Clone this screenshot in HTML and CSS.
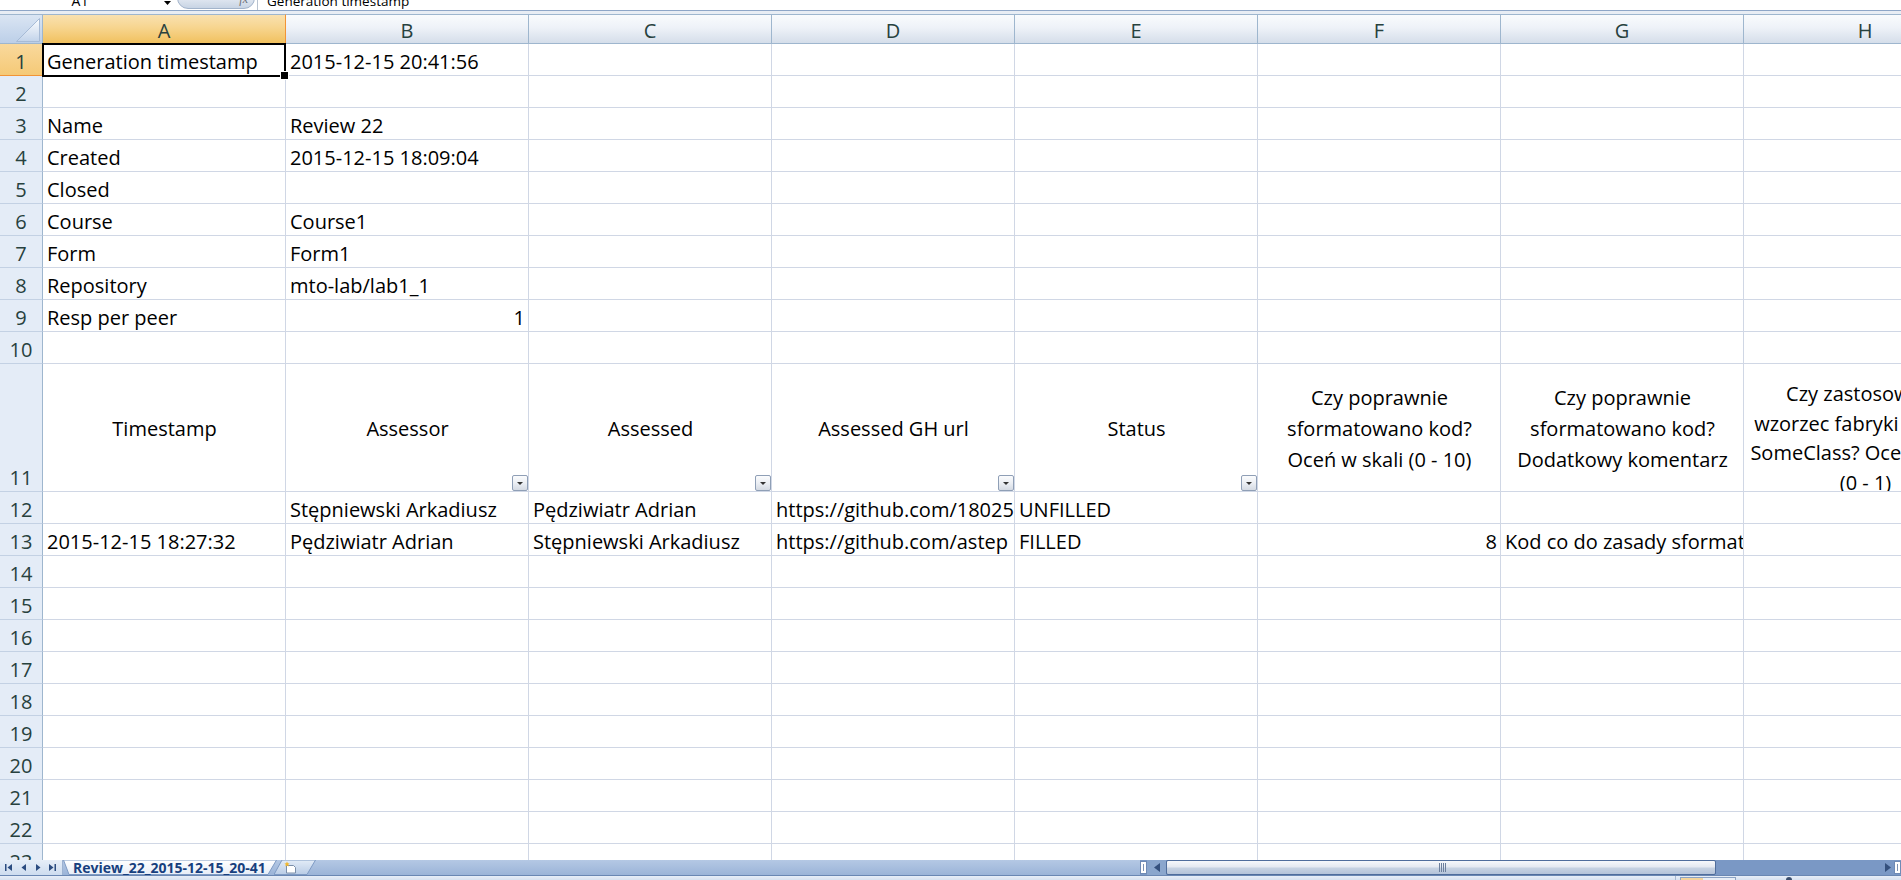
FILE: index.html
```html
<!DOCTYPE html>
<html lang="pl">
<head>
<meta charset="utf-8">
<title>Review_22_2015-12-15_20-41</title>
<link rel="stylesheet" href="styles.css">
</head>
<body>
<div class="app">
  <div class="fbar">
    <div class="namebox">
      <span class="nb-text">A1</span>
      <svg class="nb-arrow" width="7" height="4" viewBox="0 0 7 4"><path d="M0 0h7L3.5 4z" fill="#000"/></svg>
    </div>
    <div class="fxbtn"><span class="fx">fx</span></div>
    <div class="fdiv"></div>
    <div class="ftext">Generation timestamp</div>
  </div>
  <div class="sep"></div>

  <div class="sheet">
    <div class="row hdr">
      <div class="corner"><svg width="42" height="28" viewBox="0 0 42 28"><defs><linearGradient id="tg" x1="0" y1="0" x2="0" y2="1"><stop offset="0" stop-color="#fdfeff"/><stop offset="1" stop-color="#c2d3ea"/></linearGradient></defs><path d="M16.5 26.5H39.5V3.5Z" fill="url(#tg)" stroke="#a7bbd6"/></svg></div>
      <div class="ch sel">A</div><div class="ch">B</div><div class="ch">C</div><div class="ch">D</div><div class="ch">E</div><div class="ch">F</div><div class="ch">G</div><div class="ch">H</div>
    </div>

    <div class="row"><div class="rh sel">1</div><div class="c active">Generation timestamp</div><div class="c">2015-12-15 20:41:56</div><div class="c"></div><div class="c"></div><div class="c"></div><div class="c"></div><div class="c"></div><div class="c"></div></div>
    <div class="row"><div class="rh">2</div><div class="c"></div><div class="c"></div><div class="c"></div><div class="c"></div><div class="c"></div><div class="c"></div><div class="c"></div><div class="c"></div></div>
    <div class="row"><div class="rh">3</div><div class="c">Name</div><div class="c">Review 22</div><div class="c"></div><div class="c"></div><div class="c"></div><div class="c"></div><div class="c"></div><div class="c"></div></div>
    <div class="row"><div class="rh">4</div><div class="c">Created</div><div class="c">2015-12-15 18:09:04</div><div class="c"></div><div class="c"></div><div class="c"></div><div class="c"></div><div class="c"></div><div class="c"></div></div>
    <div class="row"><div class="rh">5</div><div class="c">Closed</div><div class="c"></div><div class="c"></div><div class="c"></div><div class="c"></div><div class="c"></div><div class="c"></div><div class="c"></div></div>
    <div class="row"><div class="rh">6</div><div class="c">Course</div><div class="c">Course1</div><div class="c"></div><div class="c"></div><div class="c"></div><div class="c"></div><div class="c"></div><div class="c"></div></div>
    <div class="row"><div class="rh">7</div><div class="c">Form</div><div class="c">Form1</div><div class="c"></div><div class="c"></div><div class="c"></div><div class="c"></div><div class="c"></div><div class="c"></div></div>
    <div class="row"><div class="rh">8</div><div class="c">Repository</div><div class="c">mto-lab/lab1_1</div><div class="c"></div><div class="c"></div><div class="c"></div><div class="c"></div><div class="c"></div><div class="c"></div></div>
    <div class="row"><div class="rh">9</div><div class="c">Resp per peer</div><div class="c r">1</div><div class="c"></div><div class="c"></div><div class="c"></div><div class="c"></div><div class="c"></div><div class="c"></div></div>
    <div class="row"><div class="rh">10</div><div class="c"></div><div class="c"></div><div class="c"></div><div class="c"></div><div class="c"></div><div class="c"></div><div class="c"></div><div class="c"></div></div>

    <div class="row tall">
      <div class="rh">11</div>
      <div class="c"><span>Timestamp</span></div>
      <div class="c"><span>Assessor</span><i class="fb"></i></div>
      <div class="c"><span>Assessed</span><i class="fb"></i></div>
      <div class="c"><span>Assessed GH url</span><i class="fb"></i></div>
      <div class="c"><span>Status</span><i class="fb"></i></div>
      <div class="c"><span>Czy poprawnie<br>sformatowano kod?<br>Oceń w skali (0 - 10)</span></div>
      <div class="c"><span>Czy poprawnie<br>sformatowano kod?<br>Dodatkowy komentarz</span></div>
      <div class="c h4"><span>Czy zastosowano<br>wzorzec fabryki w klasie<br>SomeClass? Oceń w skali<br>(0 - 1)</span></div>
    </div>

    <div class="row"><div class="rh">12</div><div class="c"></div><div class="c">Stępniewski Arkadiusz</div><div class="c">Pędziwiatr Adrian</div><div class="c">https://github.com/18025</div><div class="c">UNFILLED</div><div class="c"></div><div class="c"></div><div class="c"></div></div>
    <div class="row"><div class="rh">13</div><div class="c">2015-12-15 18:27:32</div><div class="c">Pędziwiatr Adrian</div><div class="c">Stępniewski Arkadiusz</div><div class="c">https://github.com/astep</div><div class="c">FILLED</div><div class="c r">8</div><div class="c">Kod co do zasady sformatowany</div><div class="c"></div></div>
    <div class="row"><div class="rh">14</div><div class="c"></div><div class="c"></div><div class="c"></div><div class="c"></div><div class="c"></div><div class="c"></div><div class="c"></div><div class="c"></div></div>
    <div class="row"><div class="rh">15</div><div class="c"></div><div class="c"></div><div class="c"></div><div class="c"></div><div class="c"></div><div class="c"></div><div class="c"></div><div class="c"></div></div>
    <div class="row"><div class="rh">16</div><div class="c"></div><div class="c"></div><div class="c"></div><div class="c"></div><div class="c"></div><div class="c"></div><div class="c"></div><div class="c"></div></div>
    <div class="row"><div class="rh">17</div><div class="c"></div><div class="c"></div><div class="c"></div><div class="c"></div><div class="c"></div><div class="c"></div><div class="c"></div><div class="c"></div></div>
    <div class="row"><div class="rh">18</div><div class="c"></div><div class="c"></div><div class="c"></div><div class="c"></div><div class="c"></div><div class="c"></div><div class="c"></div><div class="c"></div></div>
    <div class="row"><div class="rh">19</div><div class="c"></div><div class="c"></div><div class="c"></div><div class="c"></div><div class="c"></div><div class="c"></div><div class="c"></div><div class="c"></div></div>
    <div class="row"><div class="rh">20</div><div class="c"></div><div class="c"></div><div class="c"></div><div class="c"></div><div class="c"></div><div class="c"></div><div class="c"></div><div class="c"></div></div>
    <div class="row"><div class="rh">21</div><div class="c"></div><div class="c"></div><div class="c"></div><div class="c"></div><div class="c"></div><div class="c"></div><div class="c"></div><div class="c"></div></div>
    <div class="row"><div class="rh">22</div><div class="c"></div><div class="c"></div><div class="c"></div><div class="c"></div><div class="c"></div><div class="c"></div><div class="c"></div><div class="c"></div></div>
    <div class="row"><div class="rh">23</div><div class="c"></div><div class="c"></div><div class="c"></div><div class="c"></div><div class="c"></div><div class="c"></div><div class="c"></div><div class="c"></div></div>
  </div>

  <div class="tabbar">
    <div class="nav">
      <svg width="62" height="15" viewBox="0 0 62 15">
        <g fill="#2b4c80">
          <rect x="5" y="4" width="1.5" height="7"/>
          <path d="M12 4v7L7.5 7.5z"/>
          <path d="M26 4v7L21.5 7.5z"/>
          <path d="M36 4v7L40.5 7.5z"/>
          <path d="M49 4v7L53.5 7.5z"/>
          <rect x="54.5" y="4" width="1.5" height="7"/>
        </g>
      </svg>
    </div>
    <div class="tab">
      <svg class="tab-bg" width="214" height="15" viewBox="0 0 214 15" preserveAspectRatio="none"><defs><linearGradient id="tabg" x1="0" y1="0" x2="0" y2="1"><stop offset="0" stop-color="#ffffff"/><stop offset="1" stop-color="#e6edf7"/></linearGradient></defs><path d="M0.5 0L6 14.5H205L213.5 0Z" fill="url(#tabg)" stroke="#7f9bc4"/></svg>
      <span class="tab-text">Review_22_2015-12-15_20-41</span>
    </div>
    <div class="newtab">
      <svg width="42" height="15" viewBox="0 0 42 15"><defs><linearGradient id="ntg" x1="0" y1="0" x2="0" y2="1"><stop offset="0" stop-color="#e3ecf7"/><stop offset="1" stop-color="#b9cce6"/></linearGradient></defs><path d="M0 14.5H33L41.5 0H8Z" fill="url(#ntg)" stroke="#7f9bc4"/><path d="M12.5 5.5h7l2 2v5.5h-9z" fill="#fff" stroke="#7a8ea9"/><path d="M13 1.5l.8 1.7 1.8.2-1.3 1.2.4 1.8-1.7-.9-1.6.9.3-1.8-1.3-1.2 1.8-.2z" fill="#f2b72c"/></svg>
    </div>
    <div class="tabfill"></div>
    <div class="hscroll">
      <div class="split"><i></i></div>
      <div class="arr"><svg width="6" height="9" viewBox="0 0 6 9"><path d="M6 0v9L0 4.5z" fill="#34507d"/></svg></div>
      <div class="thumb"><svg width="8" height="9" viewBox="0 0 8 9"><g fill="#6c7f9d"><rect x="0" y="0" width="1" height="9"/><rect x="2" y="0" width="1" height="9"/><rect x="4" y="0" width="1" height="9"/><rect x="6" y="0" width="1" height="9"/></g></svg></div>
      <div class="track"></div>
      <div class="arr r"><svg width="6" height="9" viewBox="0 0 6 9"><path d="M0 0v9L6 4.5z" fill="#34507d"/></svg></div>
      <div class="split"><i></i></div>
    </div>
  </div>
  <div class="status">
    <div class="st-fill"></div>
    <div class="st-sep"></div>
    <div class="st-box"></div>
    <div class="st-gap"></div>
    <div class="st-dot"></div>
    <div class="st-rest"></div>
  </div>
</div>
</body>
</html>
```

FILE: styles.css
```css
* { box-sizing: border-box; }
html, body { margin: 0; padding: 0; }
body {
  width: 1901px;
  height: 880px;
  overflow: hidden;
  background: #ffffff;
  font-family: "Open Sans", "Liberation Sans", sans-serif;
}
.app {
  width: 1901px;
  height: 880px;
  display: flex;
  flex-direction: column;
  overflow: hidden;
}

/* formula bar (only its lower edge is visible) */
.fbar {
  flex: 0 0 10px;
  display: flex;
  align-items: flex-end;
  overflow: hidden;
  background: #ffffff;
}
.namebox {
  flex: 0 0 176px;
  display: flex;
  align-items: flex-end;
}
.nb-text {
  width: 160px;
  text-align: center;
  font-size: 14px;
  line-height: 19px;
  color: #000;
}
.nb-arrow { margin: 0 0 5px 4px; }
.fxbtn {
  flex: 0 0 78px;
  margin: 0 0 1px 1px;
  height: 22px;
  border: 1px solid #a3b4cb;
  border-radius: 11px;
  background: linear-gradient(#f4f6fa 0%, #e3e9f2 50%, #c8d4e4 100%);
  display: flex;
  justify-content: flex-end;
  align-items: flex-end;
  padding-right: 6px;
}
.fx {
  font-family: "Liberation Serif", serif;
  font-style: italic;
  font-size: 12px;
  line-height: 14px;
  color: #6b6f76;
  margin-bottom: 2px;
}
.fdiv {
  flex: 0 0 1px;
  margin-left: 2px;
  height: 10px;
  background: #b8c2cf;
}
.ftext {
  padding-left: 9px;
  font-size: 13.5px;
  line-height: 18px;
  color: #000;
  white-space: nowrap;
}
.sep {
  flex: 0 0 4px;
  border-top: 1px solid #8ea6c7;
  background: #e8edf4;
}

/* sheet */
.sheet {
  flex: 0 0 846px;
  overflow: hidden;
  position: relative;
}
.row {
  display: flex;
  height: 32px;
}
.row.hdr { height: 30px; }
.row.tall { height: 128px; }

.corner {
  flex: 0 0 43px;
  border-top: 1px solid #9eb6ce;
  border-right: 1px solid #9eb6ce;
  border-bottom: 1px solid #9eb6ce;
  background: linear-gradient(#dae5f3, #bccfe8);
}
.corner svg { display: block; }

.ch {
  flex: 0 0 243px;
  border-top: 1px solid #9eb6ce;
  border-right: 1px solid #9eb6ce;
  border-bottom: 1px solid #9eb6ce;
  background: linear-gradient(#f9fbfd 0%, #eef2f8 45%, #d5deea 100%);
  text-align: center;
  font-size: 20px;
  padding-top: 3px;
  line-height: 25px;
  color: #27413e;
}
.ch.sel {
  background: linear-gradient(#f9e1b0 0%, #f7d58f 45%, #f1c15f 100%);
  border-right-color: #f29436;
  border-bottom-color: #f29436;
}

.rh {
  flex: 0 0 43px;
  border-right: 1px solid #9eb6ce;
  border-bottom: 1px solid #c3d1e4;
  background: #e4ecf7;
  color: #27413e;
  font-size: 20px;
  line-height: 27px;
  display: flex;
  align-items: flex-end;
  justify-content: center;
}
.rh.sel {
  background: linear-gradient(#f9d99c, #f5c977);
  border-right-color: #f29436;
  border-bottom-color: #f29436;
}

.c {
  flex: 0 0 243px;
  border-right: 1px solid #d0d7e5;
  border-bottom: 1px solid #d0d7e5;
  font-size: 20px;
  line-height: 27px;
  padding: 0 3px 0 4px;
  white-space: nowrap;
  overflow: hidden;
  display: flex;
  align-items: flex-end;
  color: #000;
}
.c.r { justify-content: flex-end; }

.c.active {
  position: relative;
  overflow: visible;
}
.c.active::after {
  content: "";
  position: absolute;
  left: -1px;
  top: -1px;
  right: -1px;
  bottom: -2px;
  border: 2px solid #000;
  pointer-events: none;
}
.c.active::before {
  content: "";
  position: absolute;
  right: -4px;
  bottom: -5px;
  width: 7px;
  height: 7px;
  background: #000;
  border: 1px solid #fff;
  z-index: 2;
}

.tall .c {
  position: relative;
  align-items: center;
  justify-content: center;
  text-align: center;
  white-space: normal;
  line-height: 31px;
  padding-top: 2px;
}
.tall .c.h4 {
  align-items: flex-start;
  line-height: 29.5px;
  padding-top: 15px;
}

.fb {
  position: absolute;
  right: 0;
  bottom: 0;
  width: 16px;
  height: 16px;
  border: 1px solid #8f9fb6;
  border-radius: 2px;
  background: linear-gradient(#fbfcfd 0%, #eceff4 50%, #d4dae3 100%);
}
.fb::after {
  content: "";
  position: absolute;
  left: 4px;
  top: 6px;
  border-top: 3px solid #333;
  border-left: 3px solid transparent;
  border-right: 3px solid transparent;
}

/* sheet tabs + horizontal scrollbar */
.tabbar {
  flex: 0 0 16px;
  display: flex;
  border-bottom: 1px solid #6a87b3;
  background: linear-gradient(#b4c8e4, #9bb4d8);
}
.nav {
  flex: 0 0 63px;
  border-right: 1px solid #9cb2d1;
  background: linear-gradient(#e6eef8, #cddcef);
}
.nav svg { display: block; }
.tab {
  flex: 0 0 214px;
  position: relative;
  display: flex;
  align-items: center;
}
.tab-bg {
  position: absolute;
  left: 0;
  top: 0;
}
.tab-text {
  position: relative;
  padding-left: 10px;
  font-size: 14px;
  font-weight: 700;
  line-height: 15px;
  color: #173f7e;
  white-space: nowrap;
}
.newtab {
  flex: 0 0 42px;
  margin-left: -3px;
}
.newtab svg { display: block; }
.tabfill { flex: 1 1 auto; }
.hscroll {
  flex: 0 0 761px;
  display: flex;
  background: #7a98c5;
}
.split {
  flex: 0 0 7px;
  margin: 1px 0;
  background: #ffffff;
  border: 1px solid #6f8bb6;
  display: flex;
  justify-content: center;
  padding: 2px 0;
}
.split i {
  width: 1px;
  background: #7c92b3;
}
.arr {
  flex: 0 0 19px;
  display: flex;
  align-items: center;
  justify-content: center;
  background: #8aa6cd;
}
.arr.r {
  flex: 0 0 13px;
  background: #7a98c5;
}
.thumb {
  flex: 0 0 550px;
  border: 1px solid #4f6d9c;
  border-radius: 2px;
  background: linear-gradient(#f6f8fb 0%, #e4e9f1 45%, #c6d2e2 55%, #b4c3d9 100%);
  display: flex;
  align-items: center;
  justify-content: center;
  padding-left: 4px;
}
.thumb svg { display: block; }
.track { flex: 1 1 auto; }

.status {
  flex: 0 0 4px;
  display: flex;
  background: linear-gradient(#e7eef8, #d6e1f0);
}
.st-fill { flex: 0 0 1675px; }
.st-sep { flex: 0 0 1px; background: #a6b8d1; }
.st-box {
  flex: 0 0 56px;
  margin-left: 4px;
  margin-top: 1px;
  border: 1px solid #8ba2c3;
  border-bottom: 0;
  background: linear-gradient(90deg, #f3d39a 0 40%, #e8eef7 40% 100%);
}
.st-gap { flex: 0 0 50px; }
.st-dot {
  flex: 0 0 6px;
  margin-top: 1px;
  border-radius: 3px 3px 0 0;
  background: #3b4f6e;
}
.st-rest { flex: 1 1 auto; }
```
